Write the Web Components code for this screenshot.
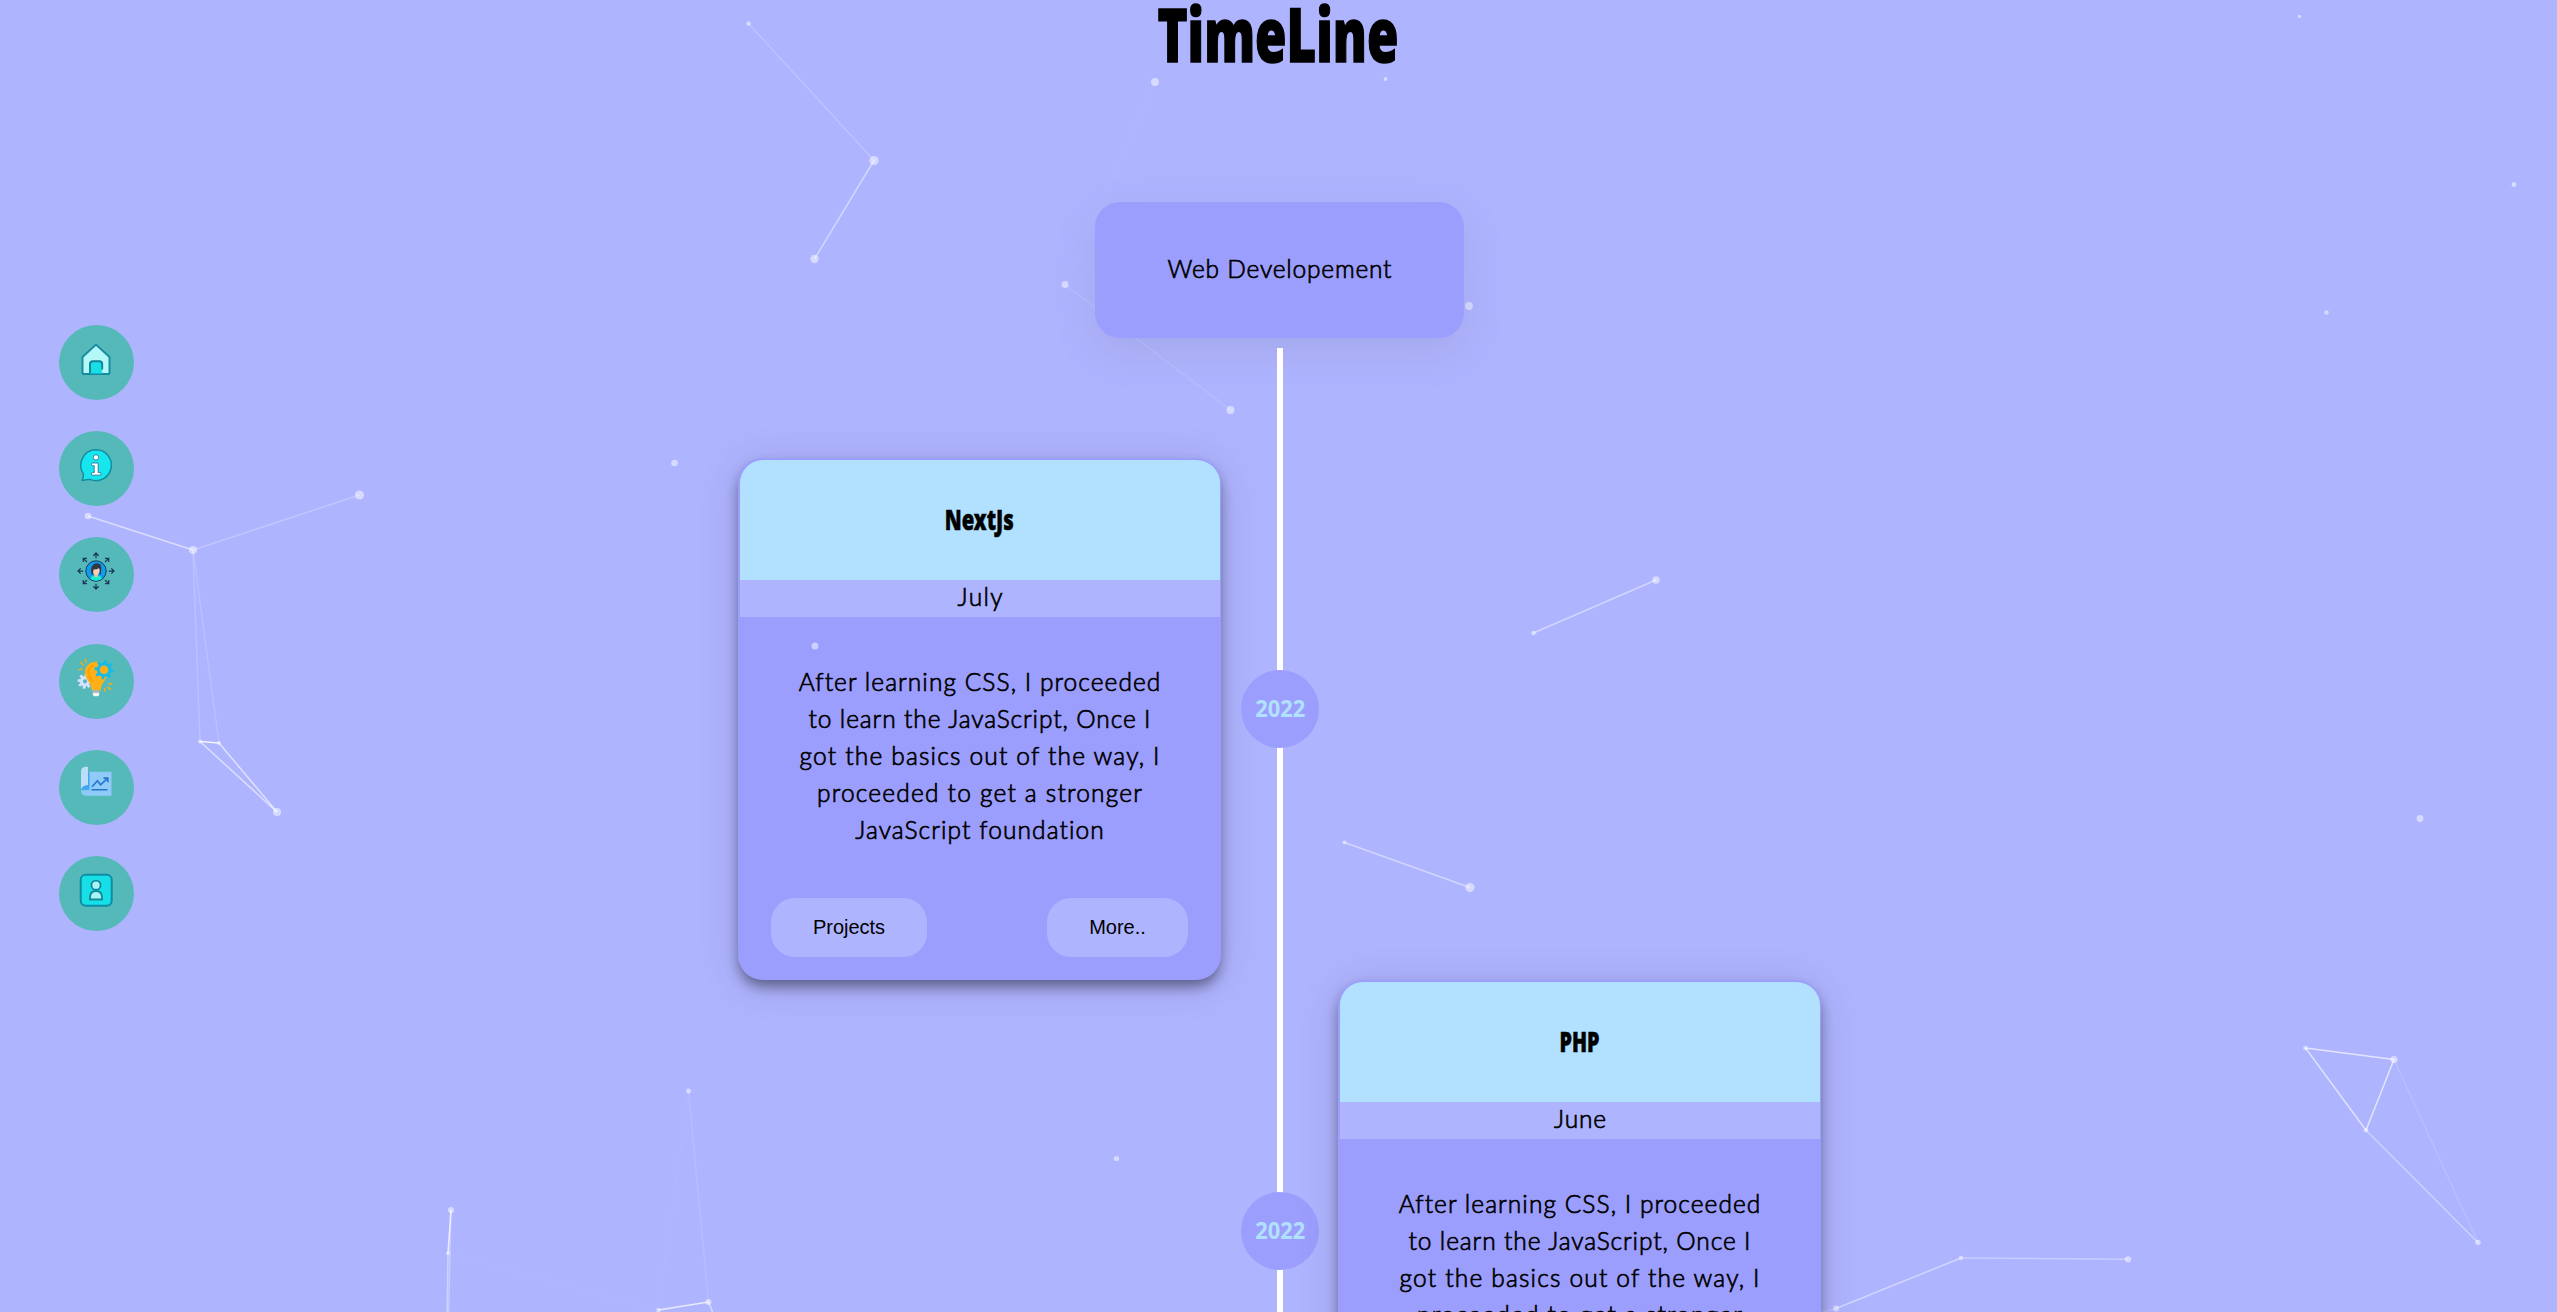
<!DOCTYPE html>
<html lang="en">
<head>
<meta charset="utf-8">
<title>TimeLine</title>
<style>
html,body{margin:0;height:100%;overflow:hidden;background:#afb4ff}
body{font-family:Lato,"Open Sans",sans-serif;color:#000}
</style>
</head>
<body>
<timeline-page></timeline-page>
<script>
const define = (name, html, setup) => customElements.define(name, class extends HTMLElement {
  connectedCallback() {
    if (this.shadowRoot) return;
    this.attachShadow({mode: 'open'}).innerHTML = html;
    if (setup) setup(this, this.shadowRoot);
  }
});

/* One line of text set to a given width, by tracking or by condensing. */
define('fit-text', `<style>
:host{display:flex;justify-content:center;white-space:nowrap}
span{display:inline-block;transform-origin:center}
</style><span><slot></slot></span>`, (el, root) => {
  const s = root.querySelector('span'), w = +el.getAttribute('width'), n = el.textContent.length;
  const natural = s.getBoundingClientRect().width;
  if (el.hasAttribute('condense')) s.style.transform = `scaleX(${w / natural})`;
  else {
    const gap = (w - natural) / (n - 1);
    s.style.letterSpacing = gap + 'px';
    s.style.marginRight = -gap + 'px';
  }
});

define('particle-field', `<style>
:host{display:block;position:absolute;inset:0;pointer-events:none}
svg{display:block;width:2557px;height:1312px}
</style><svg viewBox="0 0 2557 1312"></svg>`, (el, root) => {
  const front = el.hasAttribute('front');
  const dots = front ? [[815,646,3.5]] : [
    [748.5,23.5,2.2],[874,160.5,4.6],[814.5,259,4.2],[1065,284.5,3.4],[674.5,463,3.3],[1155,82,4],[1385.5,79,1.9],
    [1469,306,3.9],[1230.5,410,4],[1344.5,842.5,2.1],[1470,887.5,4.6],[1533.5,633,2.3],[1656,580,3.7],
    [88,516,3.3],[193,550,4],[359.5,495,4.5],[200,741.5,2],[219,743,2],[277,812,4.1],
    [451,1210,3.1],[448,1253.3,2],[688.5,1091,2.5],[708.5,1302,3],[658.5,1310,2.3],[1116.5,1158.5,2.6],
    [2305.5,1048,2.3],[2394,1059.5,3.6],[2366,1130.3,2.3],[2478,1242.5,2.7],[1961,1258,2.2],[2128,1259.3,3.1],
    [1836,1308.5,3],[2299.5,16.5,1.8],[2514,184.5,2.4],[2326.5,312.5,2.3],[2420,818.5,3.4]];
  const links = front ? [] : [
    [748.5,23.5,874,160.5,.2],[874,160.5,814.5,259,.45],[1065,284.5,1230.5,410,.12],[1155,82,1065,284.5,.03],
    [1344.5,842.5,1470,887.5,.45],[1533.5,633,1656,580,.45],[88,516,193,550,.55],[193,550,359.5,495,.25],
    [193,550,200,741.5,.18],[193,550,219,743,.16],[200,741.5,219,743,.85],[200,741.5,277,812,.58],[219,743,277,812,.6],
    [451,1210,448,1253.3,.75],[451,1210,448.5,1320,.3],[448,1253.3,447,1325,.4],[448,1253.3,658.5,1310,.04],
    [688.5,1091,708.5,1302,.12],[688.5,1091,658.5,1310,.03],[658.5,1310,708.5,1302,.7],[708.5,1302,718,1325,.5],
    [2305.5,1048,2394,1059.5,.65],[2305.5,1048,2366,1130.3,.6],[2394,1059.5,2366,1130.3,.65],
    [2366,1130.3,2478,1242.5,.38],[2394,1059.5,2478,1242.5,.14],[1836,1308.5,1961,1258,.45],[1961,1258,2128,1259.3,.34],[1836,1308.5,1800,1318,.2]];
  root.querySelector('svg').innerHTML =
    dots.map(d => `<circle cx="${d[0]}" cy="${d[1]}" r="${d[2]}" fill="#fff" fill-opacity=".5"/>`).join('') +
    links.map(l => `<line x1="${l[0]}" y1="${l[1]}" x2="${l[2]}" y2="${l[3]}" stroke="#fff" stroke-opacity="${l[4]}" stroke-width="1.5"/>`).join('');
});

const gear = (cx, cy, r, color, hole) => {
  let t = '';
  for (let i = 0; i < 8; i++) t += `<rect x="${cx - 1.4}" y="${cy - r - 2.6}" width="2.8" height="4" fill="${color}" transform="rotate(${i * 45 + 8} ${cx} ${cy})"/>`;
  return t + `<circle cx="${cx}" cy="${cy}" r="${r - 1.2}" fill="${hole}" stroke="${color}" stroke-width="3"/>`;
};
const arrows = [0,45,90,135,180,225,270,315].map(a =>
  `<path d="M20 7.200V2.200M17.400 4.700L20 2l2.600 2.700" transform="rotate(${a} 20 20)"/>`).join('');
const icons = {
  home: `<path d="M20 5.600L33.500 18v15.400q0 1.600-1.600 1.600H8.100q-1.600 0-1.600-1.600V18z" fill="#b5f8f8" stroke="#148ba0" stroke-width="1.900" stroke-linejoin="round"/><path d="M14 34.500V25q0-2.800 2.800-2.800h6.600q2.800 0 2.800 2.800v9.500z" fill="#16e0e4"/><path d="M14 34.500V25q0-2.800 2.800-2.800h6.600q2.800 0 2.800 2.800v5.500" fill="none" stroke="#128299" stroke-width="1.900"/>`,
  info: `<path d="M20 4.800a15.400 15.400 0 1 1-6 29.600q-3.500.2-7.800 1 1.500-3 1.200-6.600A15.400 15.400 0 0 1 20 4.800z" fill="#16e7ee" stroke="#148da2" stroke-width="1.500" stroke-linejoin="round"/><g fill="#fff" stroke="#287795" stroke-width=".9"><circle cx="20" cy="12.400" r="2.700"/><path d="M16.500 18h5.700v9.500H24q1 0 1 1.400t-1 1.300h-7.600q-1 0-1-1.300t1-1.400h1.800v-6.800h-1.700q-1 0-1-1.300T16.500 18z"/></g>`,
  user: `<g fill="none" stroke="#17395a" stroke-width="1.250">${arrows}</g><circle cx="20" cy="20" r="10.200" fill="#0d9cf0" stroke="#17395a" stroke-width="1"/><path d="M14 27.600q1.500-2.900 4.400-3h3.400q3 .1 4.300 3a10 10 0 0 1-12.100 0z" fill="#12efcf"/><path d="M18.200 22h3.700v3.500q-1.800 1.500-3.700 0z" fill="#f1b79b"/><ellipse cx="20" cy="19.300" rx="3.700" ry="4.600" fill="#ffcfb6"/><path d="M15.300 23.500q-1.300-10 4.300-11.300 5.500-.6 5.700 4.300l-.4 7-1.500-.3q.9-4-.2-6.200-2.200 1.700-5.600 1.600-.8 2.500-.2 4.800z" fill="#35383f"/>`,
  idea: `<g transform="translate(0 -.7)">${gear(9, 24, 4.800, '#d4e3ff', '#55b9b9')}<path d="M20 4.500c-6.500 0-11.200 4.500-11.200 10.700 0 5.600 4 8.400 6 12.800l.9 5h9l.9-5c2-4.200 5.600-6.800 5.600-12.300C31.200 9 26.500 4.500 20 4.500z" fill="#ffaf17"/><path d="M17.500 8q-5.500 2-5 8 .8 4.500 4 8.500" fill="none" stroke="#ffa000" stroke-width="2"/>${gear(28, 12.500, 7, '#16bce8', '#ffaf17')}<path d="M16.500 33.200h7v2.600h-7z" fill="#b6b8c2"/><path d="M16.900 35.800h6.200v1.500q0 1.700-1.700 1.700h-2.800q-1.700 0-1.700-1.700z" fill="#f7f6f3"/><path d="M2.500 12.500l4.200-.8M4.500 4.500l3 3.700M9.200 1.300l1 4M32.500 26.800l4-.4M31.500 29.600l3.500 3M28.900 30.800l-.3 3.600" stroke="#eeb012" stroke-width="1.500"/></g>`,
  plan: `<g transform="translate(0 -.7)"><path d="M12.500 8.500H35.500v24H10Q5 32 5 27h7.500z" fill="#90caf9"/><path d="M5 27V8q0-4.500 5.500-4.500H12v18.500Q7 22 5 27z" fill="#bbdefb"/><path d="M12 8.500h1.500v18H5q1-4.500 7-4.500z" fill="#42a5f5"/><path d="M16 23.500l5.500-6 3 4 7-6.500M27.500 14.800h4.300v4.200M15.500 26.500h16" fill="none" stroke="#2277cd" stroke-width="1.600"/></g>`,
  contact: `<rect x="4.700" y="4.700" width="31" height="31" rx="5" fill="#16e0e6" stroke="#0f8ca4" stroke-width="2"/><circle cx="20" cy="15.200" r="4.600" fill="#a9f5f5" stroke="#14899c" stroke-width="1.900"/><path d="M14 29.500v-2q0-6.500 6-6.500t6 6.500v2z" fill="#a9f5f5" stroke="#14899c" stroke-width="1.900"/>`
};

define('nav-button', `<style>
:host{display:flex;justify-content:center;width:75px;height:75px;border-radius:50%;background:#55b9b9;box-sizing:border-box;padding:14px 1px 0 0}
svg{width:40px;height:40px;display:block}
</style><svg viewBox="0 0 40 40"></svg>`, (el, root) => {
  root.querySelector('svg').innerHTML = icons[el.getAttribute('icon')];
});

define('side-nav', `<style>
:host{display:flex;flex-direction:column;gap:31.200px;padding:325px 0 0 59px;width:75px;flex:none}
</style><nav-button icon="home"></nav-button><nav-button icon="info"></nav-button><nav-button icon="user"></nav-button><nav-button icon="idea"></nav-button><nav-button icon="plan"></nav-button><nav-button icon="contact"></nav-button>`);

define('pill-button', `<style>
:host{display:block}
button{display:block;width:var(--w);height:59px;border:0;padding:0;border-radius:24px;background:#afb4ff;color:#000;font:20px/59px "Liberation Sans",Arial,sans-serif;text-align:center}
</style><button><slot></slot></button>`);

define('year-badge', `<style>
:host{display:flex;align-items:center;justify-content:center;width:78px;height:78px;border-radius:50%;background:#9c9efe;color:#b1e1ff;font:700 23px/30px "Noto Sans","Open Sans",sans-serif;margin-top:212px;box-sizing:border-box;padding-bottom:2px}
</style><fit-text width="50" condense>2022</fit-text>`);

define('event-card', `<style>
:host{display:block;box-sizing:border-box;width:483px;height:522px;border:2px solid #9c9efe;border-right-width:1px;border-radius:25px;background:#9c9efe;overflow:hidden;box-shadow:0 8px 14px -2px rgba(0,0,0,.45),0 5px 40px rgba(0,0,0,.13)}
header{height:120px;box-sizing:border-box;padding:0 1px 2px 0;background:#b1e1ff;display:flex;align-items:center;justify-content:center;font:900 29px/40px "Noto Sans","Open Sans",sans-serif;font-stretch:extra-condensed;-webkit-text-stroke:.5px #000}
.month{height:37px;background:#afb4ff;display:flex;justify-content:center;font-size:24.500px;line-height:33px;font-weight:300;-webkit-text-stroke:.7px #000}
.text{padding:46px 1px 0 0;height:235px;font-size:24.500px;line-height:37px;font-weight:300;-webkit-text-stroke:.7px #000}
footer{display:flex;justify-content:space-between;padding:0 32px 0 31px}
</style>
<header><slot name="title"></slot></header><div class="month"><slot name="month"></slot></div>
<div class="text">
<fit-text width="361">After learning CSS, I proceeded</fit-text>
<fit-text width="342">to learn the JavaScript, Once I</fit-text>
<fit-text width="360">got the basics out of the way, I</fit-text>
<fit-text width="325">proceeded to get a stronger</fit-text>
<fit-text width="249">JavaScript foundation</fit-text>
</div>
<footer><pill-button style="--w:156px">Projects</pill-button><pill-button style="--w:141px">More..</pill-button></footer>`);

define('topic-card', `<style>
:host{display:flex;align-items:center;justify-content:center;width:369px;height:136px;box-sizing:border-box;padding-bottom:4px;margin-right:1px;border-radius:25px;background:#9c9efe;box-shadow:0 13px 42px rgba(100,100,111,.15);font-size:24.500px;line-height:37px;font-weight:300;-webkit-text-stroke:.7px #000;flex:none}
</style><slot></slot>`);

define('time-line', `<style>
:host{display:grid;grid-template-columns:483px 78px 483px;column-gap:20px;row-gap:0;width:1084px;box-sizing:border-box;padding-top:110px;height:2000px;grid-auto-rows:522px;flex:none;background:linear-gradient(#fff,#fff) 539px 0/6px 100% no-repeat}
.right{grid-column:3;margin-left:-1px}
year-badge{grid-column:2}
</style>
<event-card><fit-text slot="title" width="69" condense>NextJs</fit-text><fit-text slot="month" width="45">July</fit-text></event-card><year-badge></year-badge>
<year-badge></year-badge><event-card class="right"><fit-text slot="title" width="40" condense>PHP</fit-text><fit-text slot="month" width="52">June</fit-text></event-card>`);

define('timeline-page', `<style>
:host{display:block;position:relative;width:100%;height:1312px;overflow:hidden}
.page{position:relative;display:flex;height:1312px}
main{flex:1;display:flex;flex-direction:column;align-items:center;padding-left:3px;padding-right:134px;min-width:0}
h1{margin:0;height:202px;box-sizing:border-box;flex:none;font:900 74px/68px "Noto Sans","Open Sans",sans-serif;font-stretch:extra-condensed;padding-right:4px;-webkit-text-stroke:1.500px #000}
time-line{margin-top:10px}
</style>
<particle-field></particle-field>
<div class="page"><side-nav></side-nav><main>
<h1><fit-text width="241" condense>TimeLine</fit-text></h1>
<topic-card><fit-text width="224">Web Developement</fit-text></topic-card>
<time-line></time-line>
</main></div>
<particle-field front></particle-field>`);
</script>
</body>
</html>
